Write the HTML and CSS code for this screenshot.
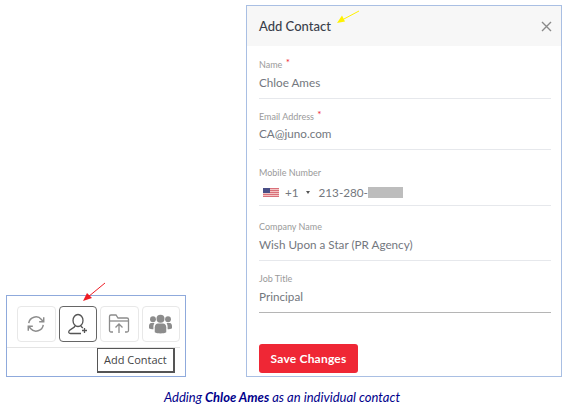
FILE: index.html
```html
<!DOCTYPE html>
<html lang="en">
<head>
    <meta charset="UTF-8">
    <title>Adding Chloe Ames</title>
    <link rel="stylesheet" href="styles.css">
</head>
<body>
    <div class="shots">
        <div class="toolbar-shot">
            <!-- red arrow sits above the panel -->
            <svg class="arrow-red" width="26" height="22" viewBox="0 0 26 22">
                <line x1="24" y1="1" x2="7" y2="15" stroke="#ee1c25" stroke-width="1"/>
                <polygon points="2,19 6,11 11,16" fill="#ee1c25"/>
            </svg>
            <div class="toolbar">
                <div class="tool">
                    <svg width="20" height="20" viewBox="0 0 22 22" fill="none" stroke="#8c8c8c" stroke-width="1.6">
                        <path d="M3 10a8 8 0 0 1 14-4l2 2.5"/>
                        <path d="M19.500 3.500v5h-5"/>
                        <path d="M19 12a8 8 0 0 1-14 4l-2-2.500"/>
                        <path d="M2.500 18.500v-5h5"/>
                    </svg>
                </div>
                <div class="tool tool-active">
                    <svg width="26" height="26" viewBox="0 0 26 26" fill="none" stroke="#555" stroke-width="1.300">
                        <ellipse cx="13" cy="9.500" rx="5" ry="6"/>
                        <path d="M10 15c-.5 2-5 3-6 5-.6 1.200-.2 2.500 1.500 2.500H16"/>
                        <path d="M16 15c.3 1 1 1.500 2 2"/>
                        <path d="M19.500 17v5M17 19.500h5"/>
                    </svg>
                </div>
                <div class="tool">
                    <svg width="22" height="22" viewBox="0 0 22 22" fill="none" stroke="#8c8c8c" stroke-width="1.300">
                        <path d="M5 19H3a1.500 1.500 0 0 1-1.500-1.500V3.500A1.500 1.500 0 0 1 3 2h5l2 3h9a1.500 1.500 0 0 1 1.500 1.500v11A1.500 1.500 0 0 1 19 19h-2"/>
                        <path d="M2 8h18"/>
                        <path d="M11 20v-9M7.500 14.500 11 11l3.500 3.500"/>
                    </svg>
                </div>
                <div class="tool">
                    <svg width="23" height="22" viewBox="0 0 22 20" fill="#8c8c8c">
                        <circle cx="11" cy="5" r="3.800"/>
                        <circle cx="3.800" cy="5.500" r="2.800"/>
                        <circle cx="18.200" cy="5.500" r="2.800"/>
                        <path d="M5.500 18v-5c0-2 1.500-3.500 3-3.500h5c1.500 0 3 1.500 3 3.500v5c-2 1.500-9 1.500-11 0z"/>
                        <path d="M4.200 15V12.500c0-1 .3-2 1-3.500H2C.8 9 0 10.600 0 12v2c1 .6 2.500 1 4.200 1z"/>
                        <path d="M17.800 15v-2.500c0-1-.3-2-1-3.500H20c1.200 0 2 1.600 2 3v2c-1 .6-2.500 1-4.200 1z"/>
                    </svg>
                </div>
            </div>
            <div class="tooltip">Add Contact</div>
        </div>

        <div class="modal">
            <svg class="arrow-yellow" width="26" height="16" viewBox="0 0 26 16">
                <line x1="24" y1="1" x2="7" y2="10" stroke="#fff200" stroke-width="1"/>
                <polygon points="2,13 7,5.500 10,11.500" fill="#fff200"/>
            </svg>
            <div class="modal-header">
                <span class="modal-title">Add Contact</span>
                <svg width="11" height="11" viewBox="0 0 11 11" stroke="#8a8a8a" stroke-width="1.400">
                    <path d="M1 1l9 9M10 1l-9 9"/>
                </svg>
            </div>
            <form class="modal-body">
                <div class="field field-name">
                    <div class="field-label">Name <span class="req">*</span></div>
                    <div class="field-value">Chloe Ames</div>
                </div>
                <div class="field field-email">
                    <div class="field-label">Email Address <span class="req">*</span></div>
                    <div class="field-value">CA@juno.com</div>
                </div>
                <div class="field field-mobile">
                    <div class="field-label">Mobile Number</div>
                    <div class="field-value phone">
                        <svg class="flag" width="16" height="9" viewBox="0 0 16 9">
                            <rect width="16" height="9" fill="#f3c4c4"/>
                            <rect y="0" width="16" height="1" fill="#d9707a"/>
                            <rect y="2" width="16" height="1" fill="#d9707a"/>
                            <rect y="4" width="16" height="1" fill="#d9707a"/>
                            <rect y="6" width="16" height="1" fill="#d9707a"/>
                            <rect y="8" width="16" height="1" fill="#d9707a"/>
                            <rect width="7" height="5" fill="#4a4f86"/>
                        </svg>
                        <span class="dial">+1</span>
                        <span class="caret"></span>
                        <span>213-280-</span>
                        <span class="redact"></span>
                    </div>
                </div>
                <div class="field field-company">
                    <div class="field-label">Company Name</div>
                    <div class="field-value">Wish Upon a Star (PR Agency)</div>
                </div>
                <div class="field field-job">
                    <div class="field-label">Job Title</div>
                    <div class="field-value">Principal</div>
                </div>
                <button type="button" class="save-btn">Save Changes</button>
            </form>
        </div>
    </div>
    <p class="caption">Adding <b>Chloe Ames</b> as an individual contact</p>
</body>
</html>
```

FILE: styles.css
```css
body {
    margin: 0;
    font-family: "Open Sans", sans-serif;
    background-color: #fff;
}

.shots {
    display: flex;
    justify-content: space-between;
    align-items: flex-end;
    padding: 5px 5px 0 6px;
}

.toolbar-shot {
    position: relative;
    width: 178px;
    height: 80px;
    border: 1px solid #8faadc;
}

.toolbar {
    display: flex;
    gap: 3px;
    padding: 10px 0 5px 10px;
    width: 163px;
    border-bottom: 1px solid #e4e4e4;
}

.tool {
    display: flex;
    justify-content: center;
    align-items: center;
    width: 36.5px;
    height: 34px;
    border: 1px solid #e8e8e8;
    border-radius: 4px;
}

.tool-active {
    border-color: #666;
}

.tooltip {
    position: absolute;
    left: 90px;
    top: 52px;
    padding: 3px 6px;
    border: 1px solid #555;
    border-width: 1px 2px 2px 1px;
    background-color: #fff;
    font-size: 11px;
    line-height: 16px;
    color: #444;
    white-space: nowrap;
}

.arrow-red {
    position: absolute;
    left: 74px;
    top: -14px;
}

.modal {
    position: relative;
    width: 314px;
    border: 1px solid #a9bfe3;
    font-family: "Lato", sans-serif;
}

.arrow-yellow {
    position: absolute;
    left: 88px;
    top: 4px;
}

.modal-header {
    display: flex;
    justify-content: space-between;
    align-items: center;
    height: 40px;
    padding: 0 9px 0 12px;
    background-color: #f7f7f7;
}

.modal-title {
    font-size: 13px;
    font-weight: 500;
    color: #3a3e4a;
}

.modal-body {
    padding: 0 10px 3px 12px;
}

.field {
    border-bottom: 1px solid #e6e8ec;
}

.field-name { padding-top: 13px; }
.field-email { padding-top: 12px; }
.field-mobile { padding-top: 17px; }
.field-company { padding-top: 15px; }
.field-job { padding-top: 12px; border-bottom-color: #b5b5b5; }

.field-label {
    font-size: 9px;
    line-height: 12px;
    color: #9a9a9a;
}

.req {
    color: #ef2735;
    font-size: 10px;
    line-height: 0;
    vertical-align: 2px;
    margin-left: 1px;
}

.field-value {
    font-size: 11.7px;
    line-height: 18px;
    margin-top: 2px;
    padding-bottom: 7px;
    color: #73777e;
}

.field-email .field-value {
    margin-top: 1px;
}

.phone {
    display: flex;
    align-items: center;
    margin-top: 4px;
    padding-bottom: 4px;
    padding-left: 4px;
}

.dial {
    margin-left: 6px;
}

.caret {
    width: 0;
    height: 0;
    margin: 0 9px 0 7px;
    border-left: 2px solid transparent;
    border-right: 2px solid transparent;
    border-top: 3px solid #555;
}

.redact {
    display: inline-block;
    width: 35px;
    height: 11px;
    background-color: #bdbdbd;
}

.save-btn {
    display: block;
    width: 99px;
    height: 29px;
    margin-top: 31px;
    padding: 0;
    border: none;
    border-radius: 3px;
    background-color: #ef2735;
    color: #fff;
    font-family: "Lato", sans-serif;
    font-size: 12px;
    font-weight: 700;
    letter-spacing: 0.2px;
}

.caption {
    margin: 12px 0 0;
    padding-right: 3px;
    text-align: center;
    font-family: "Lato", sans-serif;
    font-size: 13px;
    font-style: italic;
    color: #00008b;
}
```
